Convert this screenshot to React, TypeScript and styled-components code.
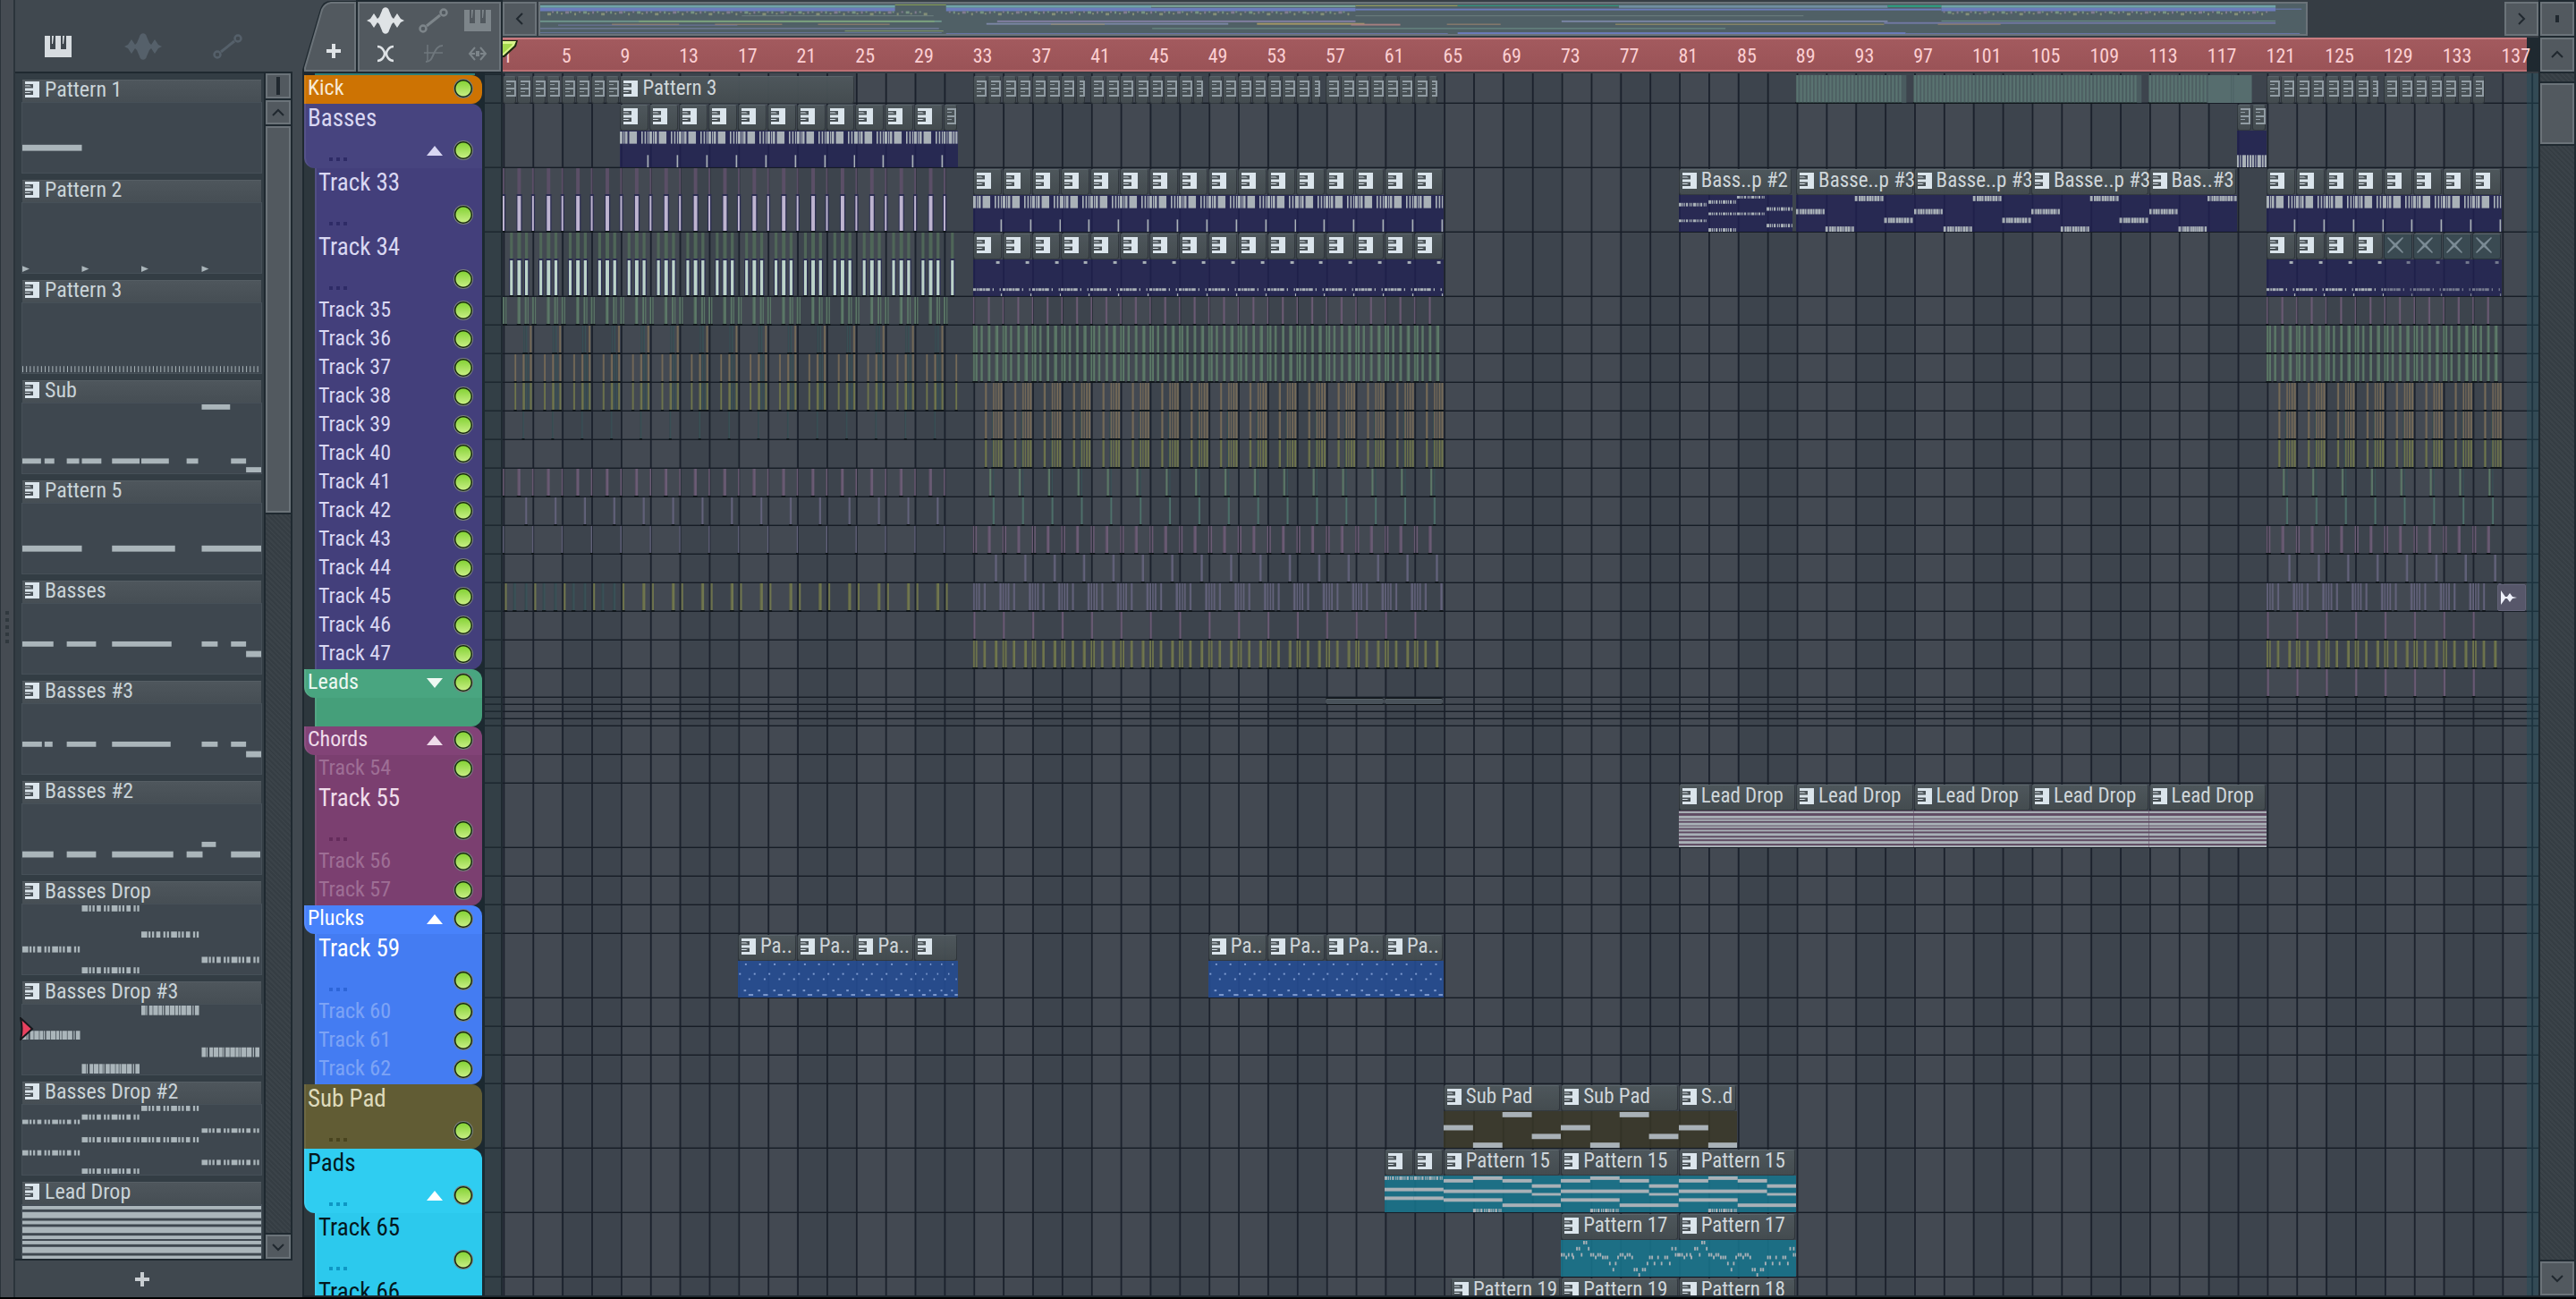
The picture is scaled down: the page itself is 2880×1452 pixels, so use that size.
import React from 'react';
import styled, { createGlobalStyle, css } from 'styled-components';

/* ---------- theme ---------- */

const GlobalStyle = createGlobalStyle`
  * { box-sizing: border-box; }
  body {
    margin: 0;
    background: #000;
    color: #c9d3d8;
    font-family: "Roboto Condensed", Roboto, "Liberation Sans", sans-serif;
    font-size: 24px;
    line-height: 24px;
    overflow: hidden;
  }
  button { font: inherit; color: inherit; border: 0; padding: 0; background: none; cursor: pointer; }
  svg { flex-shrink: 0; }
`;

const EDGE = '#1f2930';
const FACE = '#52595f';
const RIM = '#6b7379';
const PANEL = '#40484f';
const NOTE = '#a9b1b7';

const hatch = css`
  background: repeating-linear-gradient(45deg, #353d43 0 2px, #3b4349 2px 4px);
`;

/* Number of bars visible in the playlist. */
const SPAN = 138.5;
const pct = (bars: number) => `${(bars / SPAN) * 100}%`;

/* ---------- icons ---------- */

const PianoIcon = () => (
  <svg width="30" height="24" viewBox="0 0 30 24" aria-hidden="true">
    <path fill="currentColor" d="M0 0h6v15h6V0h6v15h6V0h6v24H0z" />
    <path fill="currentColor" d="M8 0h2l-1 9H8zM20 0h2l-1 9h-1z" />
  </svg>
);

const WaveIcon = () => (
  <svg width="42" height="30" viewBox="0 0 42 30" aria-hidden="true">
    <path
      fill="currentColor"
      d="M0 15l4-2 4-6 4 6 2-2 3-7c1-5 7-5 8 0l3 7 2 2 4-6 4 6 4 2-4 2-4 6-4-6-2 2-3 7c-1 5-7 5-8 0l-3-7-2-2-4 6-4-6z"
    />
  </svg>
);

const AutomationIcon = () => (
  <svg width="34" height="28" viewBox="0 0 34 28" fill="none" stroke="currentColor" aria-hidden="true">
    <circle cx="5" cy="23" r="3.500" strokeWidth="2.500" />
    <circle cx="28" cy="5" r="3.500" strokeWidth="2.500" />
    <path d="M9 20L24 8" strokeWidth="3" />
  </svg>
);

const CrossIcon = () => (
  <svg width="20" height="20" viewBox="0 0 20 20" fill="none" stroke="currentColor" aria-hidden="true">
    <path d="M1 2c5 0 8 5 8 8s-3 8-8 8M19 2c-5 0-8 5-8 8s3 8 8 8" strokeWidth="2.500" />
  </svg>
);

const CurveIcon = () => (
  <svg width="22" height="22" viewBox="0 0 22 22" fill="none" stroke="currentColor" aria-hidden="true">
    <path d="M4 1v18M0 10h21" strokeWidth="1.500" />
    <path d="M2 20c6 0 7-5 9-9s4-9 10-9" strokeWidth="2" />
  </svg>
);

const StretchIcon = () => (
  <svg width="22" height="16" viewBox="0 0 22 16" fill="none" stroke="currentColor" strokeWidth="2" aria-hidden="true">
    <path d="M8 1L2 8l6 7M14 1l6 7-6 7M3 8h5M14 8h5M10 5v6M12 5v6" />
  </svg>
);

const PlusIcon = () => (
  <svg width="16" height="16" viewBox="0 0 16 16" aria-hidden="true">
    <path fill="currentColor" d="M6 0h4v6h6v4h-6v6H6v-6H0V6h6z" />
  </svg>
);

const Chevron = ({ turn }: { turn: number }) => (
  <svg width="14" height="14" viewBox="0 0 14 14" fill="none" stroke="#20282f" strokeWidth="2" aria-hidden="true">
    <path d="M1 10l6-6 6 6" transform={`rotate(${turn} 7 7)`} />
  </svg>
);

/* Keys of a piano seen sideways: marks a pattern. */
const PatternIcon = () => (
  <svg width="16" height="18" viewBox="0 0 16 18" aria-hidden="true">
    <path fill="#dbe5ec" d="M0 0h16v18H0v-3h9v-4.500H0v-3h9V3H0z" />
    <path fill="#dbe5ec" d="M0 4.500h5l2 1H0zM0 12h7l-2 1H0z" />
  </svg>
);

/* The same keys on a clip too short to show them whole. */
const SmallPatternIcon = ({ w }: { w: number }) => (
  <svg width={w} height="18" viewBox={`0 0 ${w} 18`} opacity="0.65" aria-hidden="true">
    <path fill="#b9c6cf" d={`M0 0h${w}v18H0v-2h${w - 2}v-6H0v-2h${w - 2}V2H0z`} />
    <path fill="#b9c6cf" d="M0 4h5v1H0zM0 12h5v1H0z" />
  </svg>
);

const MuteIcon = () => (
  <svg width="18" height="18" viewBox="0 0 18 18" aria-hidden="true">
    <path fill="#7b8b95" d="M1 0l8 7 8-7 1 1-7 8 7 8-1 1-8-7-8 7-1-1 7-8-7-8z" />
  </svg>
);

/* ---------- note drawings ---------- */

type Kind = 'solid' | 'dense' | 'dash' | 'tri';
type Note = [x: number, y: number, w: number, h: number, kind?: Kind];

const DENSE = [
  [0, 0.07], [0.08, 0.02], [0.13, 0.06], [0.2, 0.08], [0.29, 0.06], [0.36, 0.02], [0.4, 0.07],
  [0.48, 0.08], [0.57, 0.05], [0.63, 0.03], [0.67, 0.08], [0.76, 0.08], [0.86, 0.02], [0.9, 0.07],
];
const DASH = [0, 0.25, 0.5, 0.75].flatMap((o, i) => [
  [o, i % 2 ? 0.07 : 0.1], [o + 0.12, 0.035], [o + 0.18, 0.035],
]);

const Notes = ({ notes, w, h, fill = NOTE }: { notes: Note[]; w: number; h: number; fill?: string }) => (
  <svg width="100%" height="100%" viewBox={`0 0 ${w} ${h}`} preserveAspectRatio="none" aria-hidden="true">
    {notes.flatMap(([x, y, nw, nh, kind = 'solid'], i) => {
      if (kind === 'tri') return [<path key={i} fill={fill} d={`M${x} ${y}l${nw} ${nh / 2}l${-nw} ${nh / 2}z`} />];
      const parts = kind === 'dense' ? DENSE : kind === 'dash' ? DASH : [[0, 1]];
      return parts.map(([o, f], k) => (
        <rect key={`${i}-${k}`} x={x + o * nw} y={y} width={f * nw} height={nh} fill={fill} />
      ));
    })}
  </svg>
);

const STRIPES: Note[] = [
  [0, 1, 269, 4], [0, 8, 269, 7], [0, 18, 269, 4], [0, 25, 269, 7],
  [0, 35, 269, 4], [0, 41, 269, 4], [0, 48, 269, 7], [0, 58, 269, 4], [0, 65, 269, 7], [0, 75, 269, 4],
];

const PATTERNS: { name: string; notes: Note[] }[] = [
  { name: 'Pattern 1', notes: [[0, 48, 67, 7]] },
  { name: 'Pattern 2', notes: [0, 67, 134, 202].map((x): Note => [x, 72, 8, 7, 'tri']) },
  { name: 'Pattern 3', notes: Array.from({ length: 64 }, (_, i): Note => [i * 4.2, 72, 1, 7]) },
  {
    name: 'Sub',
    notes: [
      [202, 1, 32, 6], [0, 63, 21, 6], [25, 63, 11, 6], [50, 63, 14, 6], [67, 63, 22, 6], [101, 63, 31, 6],
      [134, 63, 31, 6], [185, 63, 13, 6], [235, 63, 17, 6], [252, 73, 17, 6],
    ],
  },
  { name: 'Pattern 5', notes: [[0, 48, 67, 7], [101, 48, 71, 7], [202, 48, 67, 7]] },
  { name: 'Basses', notes: [[0, 43, 35, 6], [50, 43, 33, 6], [101, 43, 67, 6], [202, 43, 18, 6], [235, 43, 17, 6], [252, 54, 17, 7]] },
  {
    name: 'Basses #3',
    notes: [[0, 43, 22, 6], [25, 43, 9, 6], [50, 43, 33, 6], [101, 43, 66, 6], [202, 43, 18, 6], [235, 43, 17, 6], [252, 54, 17, 7]],
  },
  {
    name: 'Basses #2',
    notes: [[202, 43, 16, 6], [0, 54, 35, 7], [50, 54, 33, 7], [101, 54, 69, 7], [185, 54, 18, 7], [235, 54, 33, 7]],
  },
  {
    name: 'Basses Drop',
    notes: [
      [67, 1, 67, 7, 'dash'], [134, 31, 67, 7, 'dash'], [0, 48, 67, 7, 'dash'],
      [202, 60, 67, 7, 'dash'], [67, 72, 67, 7, 'dash'],
    ],
  },
  {
    name: 'Basses Drop #3',
    notes: [[134, 1, 67, 11, 'dense'], [0, 30, 67, 10, 'dense'], [202, 49, 67, 11, 'dense'], [67, 68, 67, 11, 'dense']],
  },
  {
    name: 'Basses Drop #2',
    notes: [
      [134, 1, 67, 6, 'dash'], [67, 11, 67, 6, 'dash'], [0, 17, 67, 5, 'dash'], [202, 27, 67, 5, 'dash'],
      [67, 37, 67, 6, 'dash'], [134, 37, 67, 6, 'dash'], [0, 52, 67, 6, 'dash'], [202, 63, 67, 6, 'dash'],
      [67, 73, 67, 6, 'dash'],
    ],
  },
  { name: 'Lead Drop', notes: STRIPES },
];

/* Clip previews use a 100 x 42 box. */
const BASS: Note[] = [
  [0, 1, 9, 14], [12, 1, 4, 14], [18, 1, 8, 14], [32, 1, 26, 14], [73, 1, 5, 14], [84, 1, 5, 14], [94, 1, 4, 14],
  [93, 28, 5, 14],
];
const BASS_LOW: Note[] = [[0, 28, 12, 14], [18, 28, 5, 14], [26, 28, 3, 14], [36, 28, 25, 14], [67, 28, 12, 14], [85, 28, 14, 14]];
const MELODY: Note[] = [
  [78, 2, 12, 3], [0, 33, 10, 3], [13, 33, 5, 3], [20, 33, 12, 3], [34, 33, 7, 3], [43, 33, 14, 3],
  [66, 33, 4, 3], [90, 33, 4, 3], [94, 39, 4, 3],
];
const DROP3: Note[] = [[0, 16, 25, 6, 'dense'], [25, 36, 25, 6, 'dense'], [50, 1, 25, 6, 'dense'], [75, 26, 25, 6, 'dense']];
const DROP3_SHORT: Note[] = [[0, 16, 33, 6, 'dense'], [33, 36, 33, 6, 'dense'], [66, 1, 34, 6, 'dense']];
const DROP2: Note[] = [
  [0, 9, 25, 4, 'dash'], [0, 28, 25, 3, 'dash'], [26, 6, 25, 4, 'dash'], [26, 20, 25, 3, 'dash'], [26, 38, 25, 4, 'dash'],
  [51, 1, 25, 3, 'dash'], [51, 20, 25, 3, 'dash'], [77, 14, 25, 4, 'dash'], [77, 33, 25, 4, 'dash'],
];
const SUBPAD: Note[] = [[0, 16, 25, 6], [25, 36, 25, 6], [50, 1, 25, 6], [75, 26, 25, 6]];
const SUBPAD_SHORT: Note[] = [[0, 16, 50, 6], [50, 36, 50, 6]];
const PAD_INTRO: Note[] = [[0, 1, 100, 4, 'dash'], [0, 14, 100, 4], [0, 24, 100, 4]];
const PAD: Note[] = [
  [0, 4, 25, 4], [25, 1, 25, 4], [50, 4, 25, 4], [75, 10, 25, 4], [0, 16, 75, 4], [75, 20, 25, 3],
  [0, 26, 50, 4], [50, 32, 50, 4], [25, 38, 25, 4, 'dash'],
];
const dot = ([x, y]: number[]): Note => [x, y, 1.4, 4];
const ARP: Note[] = [
  [0, 15], [2, 15], [4, 18], [6, 15], [9, 15], [10, 18], [13, 8], [15, 8], [17, 15], [19, 1], [21, 1], [23, 8],
  [25, 15], [27, 15], [29, 18], [31, 15], [33, 15], [35, 18], [37, 18], [39, 18], [41, 25], [44, 32], [46, 25], [48, 18],
  [50, 15], [52, 15], [54, 18], [56, 15], [58, 15], [60, 18], [62, 32], [64, 32], [66, 38], [69, 32], [71, 32], [73, 25],
  [75, 18], [77, 18], [79, 25], [82, 18], [85, 25], [88, 18], [90, 18], [92, 25], [94, 8], [97, 8], [97, 15], [99, 15],
].map(dot);
const PLUCK: Note[] = [
  [2, 14, 3, 2], [12, 3, 3, 2], [18, 20, 3, 2], [27, 14, 3, 2], [36, 3, 3, 2], [44, 20, 3, 2],
  [52, 14, 3, 2], [61, 3, 3, 2], [69, 20, 3, 2], [77, 14, 3, 2], [86, 3, 3, 2], [94, 20, 3, 2],
  [10, 33, 4, 2], [18, 38, 8, 2], [34, 33, 4, 2], [43, 38, 8, 2], [60, 33, 4, 2], [68, 38, 8, 2], [84, 33, 4, 2], [92, 38, 7, 2],
];
const LEAD: Note[] = [
  [0, 1, 100, 2], [0, 6, 100, 3], [0, 10, 100, 2], [0, 14, 100, 3], [0, 18, 100, 2],
  [0, 22, 100, 2], [0, 26, 100, 3], [0, 31, 100, 2], [0, 35, 100, 3], [0, 40, 100, 2],
];

/* ---------- playlist data ---------- */

interface ClipData {
  at: number;
  len: number;
  label?: string;
  tint?: string;
  notes?: Note[];
  look?: 'full' | 'mini' | 'mute' | 'audio';
}
type Hits = [number, number][];
interface Slices {
  color: string;
  from: number;
  to: number;
  hits: Hits;
  body?: string;
}
interface TrackData {
  name: string;
  tall?: boolean;
  faint?: boolean;
  clips?: ClipData[];
  slices?: Slices[];
}
interface GroupData {
  head: TrackData;
  color: string;
  low: string;
  text: string;
  dots: string;
  arrow?: 'up' | 'down';
  children?: TrackData[];
  collapsed?: number;
}

const NAVY = 'rgba(33, 33, 84, 0.76)';
const OLIVE = 'rgba(57, 55, 38, 0.82)';
const TEAL = 'rgba(24, 116, 140, 0.88)';
const BLUE = 'rgba(36, 76, 148, 0.88)';

const every = (from: number, to: number, step: number, make: (at: number) => ClipData) =>
  Array.from({ length: Math.ceil((to - from) / step) }, (_, i) => make(from + i * step));

const minis = (from: number, count: number, last = 0.9) =>
  every(from, from + count, 1, (at) => ({ at, len: at === from + count - 1 ? last : 0.98, look: 'mini' }));
const bass = (from: number, to: number) => every(from, to, 2, (at) => ({ at, len: 2, tint: NAVY, notes: BASS }));
const melody = (from: number, to: number, look: ClipData['look'] = 'full') =>
  every(from, to, 2, (at) => ({ at, len: 2, tint: NAVY, notes: MELODY, look }));

const C = {
  mauve: '#6b5c75', green: '#5d7969', tan: '#756b5a', olive: '#70764f', lilac: '#63637b', teal: '#3a5157', pine: '#4f716c',
};
const early = (color: string, hits: Hits, from = 1, to = 31.2): Slices => ({ color, hits, from, to });
const late = (color: string, hits: Hits): Slices[] => [
  { color, hits, from: 33, to: 65 },
  { color, hits, from: 121, to: 137 },
];
const GREEN_RUN: Hits = [[0, 0.12], [0.15, 0.15], [0.5, 0.16], [1, 0.18], [1.5, 0.22]];
const SWING: Hits = [[0.8, 0.14], [1.35, 0.1], [1.52, 0.08], [1.68, 0.12], [1.85, 0.14]];

const GROUPS: GroupData[] = [
  {
    color: '#cd7303', low: '#c76e00', text: '#f7ead8', dots: '#8a4c00',
    head: {
      name: 'Kick',
      clips: [
        ...minis(1, 8, 0.98), { at: 9, len: 16, label: 'Pattern 3' },
        ...minis(33, 8, 0.66), ...minis(41, 8, 0.72), ...minis(49, 8, 0.7), ...minis(57, 8, 0.68),
        ...minis(121, 8, 0.66), ...minis(129, 7),
      ],
      slices: [[89, 96], [97, 112], [113, 117]].map(([from, to]): Slices => ({
        color: '#5a726f', from, to,
        hits: [0, 0.25, 0.5, 0.75, 1, 1.25, 1.5, 1.75].map((o): [number, number] => [o, 0.15]),
      })),
    },
  },
  {
    color: '#47447f', low: '#433f7b', text: '#d9d7f2', dots: '#2e2b66', arrow: 'up',
    head: {
      name: 'Basses', tall: true,
      clips: [
        ...bass(9, 31),
        { at: 31, len: 0.95, tint: NAVY, notes: BASS_LOW.map(([x, , w]) => [x, 1, w, 14] as Note), look: 'mini' },
        { at: 119, len: 1, tint: NAVY, notes: BASS_LOW, look: 'mini' },
        { at: 120, len: 0.98, tint: NAVY, notes: BASS_LOW, look: 'mini' },
      ],
    },
    children: [
      {
        name: 'Track 33', tall: true,
        clips: [
          ...bass(33, 65),
          { at: 81, len: 7.75, label: 'Bass..p #2', tint: NAVY, notes: DROP2 },
          ...every(89, 113, 8, (at) => ({ at, len: 8, label: 'Basse..p #3', tint: NAVY, notes: DROP3 })),
          { at: 113, len: 6, label: 'Bas..#3', tint: NAVY, notes: DROP3_SHORT },
          ...bass(121, 137),
        ],
        slices: [{ color: '#5b4f67', body: '#beb4d0', from: 1, to: 31.2, hits: [[0, 0.12], [1, 0.24]] }],
      },
      {
        name: 'Track 34', tall: true,
        clips: [...melody(33, 65), ...melody(121, 129), ...melody(129, 137, 'mute')],
        slices: [{ color: '#4f6658', body: '#bcd3c9', from: 1, to: 31.6, hits: [[0.5, 0.19], [1, 0.24], [1.52, 0.2]] }],
      },
      { name: 'Track 35', slices: [early(C.green, [[0, 0.12], [0.18, 0.08], [1, 0.2], [1.5, 0.12], [1.68, 0.08]]), ...late(C.mauve, [[0, 0.1], [1, 0.14]])] },
      { name: 'Track 36', slices: [early(C.teal, [[1.4, 0.08], [1.55, 0.12]]), early(C.tan, [[1.84, 0.13]]), ...late(C.green, GREEN_RUN)] },
      {
        name: 'Track 37',
        slices: [
          early(C.tan, [[0.8, 0.12], [1.35, 0.14], [1.85, 0.13]]), early(C.teal, [[1.54, 0.1], [1.7, 0.08]]),
          early(C.tan, [[0.8, 0.12]], 31, 32), ...late(C.green, GREEN_RUN),
        ],
      },
      {
        name: 'Track 38',
        slices: [
          early(C.olive, [[0.8, 0.12], [1.35, 0.16], [1.85, 0.13]]), early(C.teal, [[1.54, 0.1], [1.7, 0.1]]),
          early(C.olive, [[0.8, 0.12]], 31, 32), ...late(C.tan, SWING),
        ],
      },
      { name: 'Track 39', slices: [early(C.teal, [[1.35, 0.1]]), ...late(C.teal, [[1.28, 0.1]]), ...late(C.tan, SWING)] },
      { name: 'Track 40', slices: [...late(C.teal, [[1.28, 0.1]]), ...late(C.olive, SWING)] },
      { name: 'Track 41', slices: [early(C.mauve, [[0, 0.1], [1, 0.2]]), ...late(C.green, [[1.1, 0.14]]), ...late(C.teal, [[1.33, 0.1]])] },
      { name: 'Track 42', slices: [early(C.lilac, [[1.52, 0.14]]), ...late(C.pine, [[1.33, 0.13]])] },
      { name: 'Track 43', slices: [early(C.lilac, [[0, 0.09]]), ...late(C.mauve, [[0, 0.09], [0.16, 0.1], [1, 0.2]])] },
      { name: 'Track 44', slices: late(C.lilac, [[1.47, 0.16]]) },
      {
        name: 'Track 45',
        clips: [{ at: 136.7, len: 1.95, look: 'audio' }],
        slices: [
          early(C.olive, [[0.15, 0.13]]), early(C.teal, [[0.72, 0.18], [1.5, 0.18]], 1, 9), early(C.olive, [[1.5, 0.2]], 9, 31),
          ...late(C.lilac, [[0, 0.12], [0.18, 0.1], [0.35, 0.12], [0.72, 0.14], [1.78, 0.16]]),
        ],
      },
      { name: 'Track 46', slices: late(C.mauve, [[0.02, 0.14]]) },
      { name: 'Track 47', slices: late(C.olive, [[0, 0.12], [0.17, 0.12], [0.7, 0.17], [1.47, 0.19]]) },
    ],
  },
  {
    color: '#49a580', low: '#459f7a', text: '#eef8f2', dots: '#2d7757', arrow: 'down', collapsed: 4,
    head: { name: 'Leads', slices: [{ color: C.mauve, from: 121, to: 136, hits: [[0.02, 0.15]] }] },
  },
  {
    color: '#824377', low: '#7b3f70', text: '#efdcea', dots: '#652c5c', arrow: 'up',
    head: { name: 'Chords' },
    children: [
      { name: 'Track 54', faint: true },
      {
        name: 'Track 55', tall: true,
        clips: every(81, 121, 8, (at) => ({ at, len: 8, label: 'Lead Drop', tint: '#5f4a62', notes: LEAD })),
      },
      { name: 'Track 56', faint: true },
      { name: 'Track 57', faint: true },
    ],
  },
  {
    color: '#4882fb', low: '#447cf2', text: '#ffffff', dots: '#2d65d8', arrow: 'up',
    head: { name: 'Plucks' },
    children: [
      {
        name: 'Track 59', tall: true,
        clips: [
          ...every(17, 29, 4, (at) => ({ at, len: 4, label: 'Pa..', tint: BLUE, notes: PLUCK })),
          { at: 29, len: 3, tint: BLUE, notes: PLUCK },
          ...every(49, 65, 4, (at) => ({ at, len: 4, label: 'Pa..', tint: BLUE, notes: PLUCK })),
        ],
      },
      { name: 'Track 60', faint: true },
      { name: 'Track 61', faint: true },
      { name: 'Track 62', faint: true },
    ],
  },
  {
    color: '#615c34', low: '#5b562f', text: '#dedabb', dots: '#49441f',
    head: {
      name: 'Sub Pad', tall: true,
      clips: [
        { at: 65, len: 8, label: 'Sub Pad', tint: OLIVE, notes: SUBPAD },
        { at: 73, len: 8, label: 'Sub Pad', tint: OLIVE, notes: SUBPAD },
        { at: 81, len: 4, label: 'S..d', tint: OLIVE, notes: SUBPAD_SHORT },
      ],
    },
  },
  {
    color: '#2fcdf1', low: '#2cc9ed', text: '#04181e', dots: '#0e97c4', arrow: 'up',
    head: {
      name: 'Pads', tall: true,
      clips: [
        ...every(61, 65, 2, (at) => ({ at, len: 2, tint: TEAL, notes: PAD_INTRO })),
        ...every(65, 89, 8, (at) => ({ at, len: 8, label: 'Pattern 15', tint: TEAL, notes: PAD })),
      ],
    },
    children: [
      { name: 'Track 65', tall: true, clips: every(73, 89, 8, (at) => ({ at, len: 8, label: 'Pattern 17', tint: TEAL, notes: ARP })) },
      {
        name: 'Track 66', tall: true,
        clips: [
          { at: 65.5, len: 7.5, label: 'Pattern 19', tint: TEAL },
          { at: 73, len: 8, label: 'Pattern 19', tint: TEAL },
          { at: 81, len: 8, label: 'Pattern 18', tint: TEAL },
        ],
      },
    ],
  },
];

/* ---------- shell ---------- */

const Shell = styled.main`
  display: flex;
  height: 100vh;
  border-bottom: 2px solid #000;
  background: ${PANEL};
`;

const Splitter = styled.div`
  flex: 0 0 17px;
  display: flex;
  flex-direction: column;
  align-items: center;
  justify-content: center;
  gap: 4px;
  padding-bottom: 48px;
  border-left: 1px solid #2b333a;
  border-right: 2px solid #2b343b;
  background: #454b52;
`;

const Grip = styled.i<{ $color: string; $size: number }>`
  display: block;
  width: ${(p) => p.$size}px;
  height: ${(p) => p.$size}px;
  background: ${(p) => p.$color};
`;

/* ---------- browser ---------- */

const Browser = styled.aside`
  flex: 0 0 321px;
  display: flex;
  flex-direction: column;
  min-height: 0;
`;

const BrowserTabs = styled.nav`
  flex: 0 0 80px;
  display: flex;
  padding: 24px 36px 0 0;
`;

const BrowserTab = styled.button<{ $active?: boolean }>`
  flex: 1;
  display: grid;
  place-items: center;
  height: 56px;
  color: ${(p) => (p.$active ? '#d7dce0' : '#55606a')};
`;

const BrowserBody = styled.div`
  flex: 1;
  display: flex;
  min-height: 0;
  margin-right: 11px;
  border: solid ${EDGE};
  border-width: 2px 2px 2px 0;
`;

const PatternList = styled.ul`
  flex: 1;
  margin: 0;
  padding: 7px 2px 0 7px;
  overflow: hidden;
  list-style: none;
  background: #333d44;
  border-right: 2px solid ${EDGE};
`;

const PatternItem = styled.li`
  position: relative;
  height: 105px;
  margin-bottom: 7px;
`;

const PatternTitle = styled.button`
  display: flex;
  align-items: center;
  gap: 6px;
  width: calc(100% - 2px);
  height: 25px;
  margin-left: 1px;
  padding: 0 0 4px 3px;
  border-top: 1px solid #565f65;
  background: linear-gradient(#4e565c, #464e54);
`;

const Preview = styled.div`
  height: 80px;
  border: 1px solid #465058;
  background: #3e474f;
  & svg { display: block; }
`;

const Playing = styled.svg`
  position: absolute;
  left: -2px;
  top: 40px;
`;

const BrowserFoot = styled.div`
  flex: 0 0 41px;
  display: grid;
  place-items: center;
  padding-right: 38px;
`;

const PlainButton = styled.button`
  display: grid;
  place-items: center;
  padding: 8px;
  color: #c9ced2;
`;

const ScrollColumn = styled.div<{ $size: number }>`
  flex: 0 0 ${(p) => p.$size}px;
  display: flex;
  flex-direction: column;
  gap: 2px;
  background: ${EDGE};
`;

const SideScroll = styled(ScrollColumn)`
  padding: 0 2px;
`;

const ScrollButton = styled.button<{ $h: number }>`
  flex: 0 0 ${(p) => p.$h}px;
  display: grid;
  place-items: center;
  border: 2px solid ${RIM};
  background: ${FACE};
`;

const Thumb = styled.div<{ $share: number }>`
  flex: 0 0 ${(p) => p.$share}%;
  border: 2px solid ${RIM};
  background: ${FACE};
`;

const Trough = styled.div<{ $h?: number }>`
  flex: ${(p) => (p.$h ? `0 0 ${p.$h}px` : '1')};
  ${hatch}
`;

const Bar = styled.i<{ $h: number }>`
  width: 4px;
  height: ${(p) => p.$h}px;
  background: #20282f;
`;

/* ---------- playlist ---------- */

const Playlist = styled.section`
  flex: 1;
  display: flex;
  flex-direction: column;
  min-width: 0;
  border-left: 2px solid ${EDGE};
`;

const TopBar = styled.header`
  flex: 0 0 82px;
  display: flex;
  background: #363d44;
`;

const Tools = styled.div`
  flex: 0 0 222px;
  display: flex;
  gap: 2px;
  padding: 2px 2px 2px 0;
  background: ${EDGE};
`;

const TabButton = styled.button`
  position: relative;
  flex: 0 0 58px;
  display: grid;
  place-items: end start;
  padding: 0 0 15px 25px;
  color: #dfe3e6;
`;

const TabShape = styled.svg`
  position: absolute;
  inset: -2px 0 0 -2px;
`;

const PlusMark = styled.span`
  position: relative;
  display: grid;
`;

const ToolGrid = styled.div`
  flex: 1;
  display: grid;
  grid-template: 38px 36px / 58px 50px 1fr;
  border: 2px solid ${RIM};
  background: ${FACE};
`;

const Tool = styled.button<{ $tone: string }>`
  display: grid;
  place-items: center;
  color: ${(p) => p.$tone};
`;

const Timeline = styled.div`
  flex: 1;
  display: flex;
  flex-direction: column;
  gap: 2px;
  padding-top: 2px;
  min-width: 0;
`;

const MapRow = styled.div`
  display: flex;
  height: 38px;
`;

const ArrowButton = styled.button`
  flex: 0 0 38px;
  display: grid;
  place-items: center;
  border: 2px solid ${RIM};
  background: ${FACE};
`;

const MapTrack = styled.div`
  flex: 1;
  padding-left: 2px;
`;

const MapThumb = styled.div`
  width: 90%;
  height: 38px;
  border: 2px solid ${RIM};
  background: #506066;
  & svg { display: block; }
`;

const Ruler = styled.div`
  position: relative;
  display: flex;
  height: 38px;
  color: #fccfd2;
  font-size: 22px;
  line-height: 41px;
  background:
    linear-gradient(#c97c80 0 2px, #a35a5e 2px, #9a5357 36px, #bd7074 36px) 0 0 / calc(100% - 13px) 100% no-repeat,
    ${EDGE};
`;

const RulerMark = styled.span`
  flex: 0 0 ${pct(4)};
  min-width: 0;
  white-space: nowrap;
`;

const Playhead = styled.svg`
  position: absolute;
  left: 0;
  top: 3px;
`;

const CornerColumn = styled.div`
  flex: 0 0 42px;
  display: flex;
  flex-direction: column;
  gap: 2px;
  padding: 2px;
  background: ${EDGE};
`;

const Body = styled.div`
  flex: 1;
  display: flex;
  min-height: 0;
  border-bottom: 2px solid ${EDGE};
`;

const Heads = styled.div`
  flex: 0 0 202px;
  padding: 0 3px 0 0;
  overflow: hidden;
  background: #1c2930;
`;

const Sliver = styled.div`
  height: 2px;
  margin: 0 8px 0 12px;
  background: #2f7f78;
`;

const Group = styled.div`
  overflow: hidden;
  border-radius: 0 12px 12px 0;
  background: #2d373d;
`;

const Head = styled.div<{ $tall?: boolean; $child?: boolean; $parent?: boolean; $bg: string; $fg: string }>`
  display: flex;
  justify-content: space-between;
  height: ${(p) => (p.$tall ? 72 : 32)}px;
  margin-left: ${(p) => (p.$child ? 12 : 0)}px;
  padding: 2px 10px 0 2px;
  border-left: 2px solid rgba(255, 255, 255, 0.08);
  border-bottom-left-radius: ${(p) => (p.$parent ? 12 : 0)}px;
  background: ${(p) => p.$bg};
  color: ${(p) => p.$fg};
  font-size: ${(p) => (p.$tall ? 27 : 24)}px;
  line-height: ${(p) => (p.$tall ? 28 : 24)}px;
`;

const NameStack = styled.div`
  display: flex;
  flex-direction: column;
  justify-content: space-between;
`;

const NameLabel = styled.label<{ $faint?: boolean }>`
  opacity: ${(p) => (p.$faint ? 0.3 : 1)};
  white-space: nowrap;
`;

const DotMenu = styled.button<{ $child?: boolean }>`
  display: flex;
  gap: 4px;
  padding: 0 0 8px ${(p) => (p.$child ? 12 : 24)}px;
`;

const Controls = styled.div<{ $tall?: boolean }>`
  display: flex;
  align-items: center;
  gap: 12px;
  height: 26px;
  margin-top: ${(p) => (p.$tall ? 37 : 0)}px;
`;

const Led = styled.input`
  appearance: none;
  width: 22px;
  height: 22px;
  margin: 0;
  border: 1px solid rgba(190, 190, 200, 0.6);
  border-radius: 50%;
  background: radial-gradient(circle, transparent 0 8px, #12240c 9px), linear-gradient(#7fd02f, #cdf08a);
`;

const FoldButton = styled.button`
  display: grid;
`;

const CollapsedStub = styled.div<{ $bg: string }>`
  height: 32px;
  margin-left: 12px;
  border-left: 2px solid rgba(255, 255, 255, 0.08);
  background: ${(p) => p.$bg};
`;

const Strip = styled.div`
  flex: 0 0 20px;
  overflow: hidden;
  border-right: 2px solid ${EDGE};
  background: #333f46;
`;

const StripCell = styled.div<{ $h: number }>`
  height: ${(p) => p.$h}px;
  box-shadow: inset 0 -1px #1d2830, inset 0 -2px #263138;
`;

const Lanes = styled.div`
  position: relative;
  flex: 1;
  min-width: 0;
  padding-top: 2px;
  overflow: hidden;
`;

const Grid = styled.svg`
  position: absolute;
  inset: 0;
  width: 100%;
  height: 100%;
`;

const PastEnd = styled.div`
  position: absolute;
  inset: 0 0 0 auto;
  width: 13px;
  background: rgba(34, 75, 88, 0.45);
`;

const Lane = styled.div<{ $h: number }>`
  position: relative;
  height: ${(p) => p.$h}px;
  box-shadow: inset 0 -1px #171d26, inset 0 -2px rgba(27, 34, 43, 0.45);
`;

const SliceLayer = styled.svg`
  position: absolute;
  inset: 0;
  width: 100%;
  height: 100%;
`;

const ClipBox = styled.article<{ $h: number }>`
  position: absolute;
  top: 1px;
  display: flex;
  flex-direction: column;
  height: ${(p) => p.$h}px;
`;

const ClipHead = styled.header<{ $look: string; $fill?: boolean }>`
  flex: ${(p) => (p.$fill ? '1' : '0 0 29px')};
  display: flex;
  align-items: center;
  gap: 5px;
  margin-right: 1px;
  padding: 0 0 3px 3px;
  border: 1px solid rgba(20, 26, 32, 0.45);
  border-top-color: #5a646a;
  border-radius: 3px;
  background: ${(p) =>
    p.$look === 'mute' ? '#3a4a52' : 'linear-gradient(rgba(78, 87, 92, 0.97), rgba(68, 76, 80, 0.97))'};
  color: #cfd6da;
  font-size: 23px;
  white-space: pre;
`;

const ClipBody = styled.div<{ $tint: string; $mute?: boolean }>`
  flex: 1;
  min-height: 0;
  background: ${(p) => p.$tint};
  & svg { display: block; opacity: ${(p) => (p.$mute ? 0.6 : 1)}; }
`;

const AudioClip = styled.div`
  position: absolute;
  top: 1px;
  display: grid;
  align-items: center;
  height: 30px;
  padding-left: 3px;
  border: 1px solid #626277;
  border-radius: 2px;
  background: #57576a;
`;

const StubClip = styled.div`
  position: absolute;
  top: 1px;
  height: 6px;
  border-top: 1px solid #5a646a;
  border-radius: 2px;
  background: #49525a;
  box-shadow: 0 1px #0e1317, 0 -1px #0e1317;
`;

/* ---------- pieces ---------- */

const Clip = ({ clip, tall }: { clip: ClipData; tall?: boolean }) => {
  const place = { left: pct(clip.at - 1), width: pct(clip.len) };
  const look = clip.look ?? 'full';
  if (look === 'audio') {
    return (
      <AudioClip style={place}>
        <svg width="18" height="16" viewBox="0 0 18 16" aria-hidden="true">
          <path fill="#eef0fa" d="M0 0l5 7h2l3-4 3 4 5 1-5 1-3 4-3-4H5l-5 7z" />
        </svg>
      </AudioClip>
    );
  }
  return (
    <ClipBox $h={tall ? 70 : 31} style={place}>
      <ClipHead $look={look} $fill={!clip.tint && !tall}>
        {look === 'mute' && <MuteIcon />}
        {look === 'mini' && <SmallPatternIcon w={Math.round(clip.len * 16) - 5} />}
        {look === 'full' && <PatternIcon />}
        {clip.label && <span>{clip.label}</span>}
      </ClipHead>
      {clip.tint && (
        <ClipBody $tint={clip.tint} $mute={look === 'mute'}>
          {clip.notes && <Notes notes={clip.notes} w={100} h={42} fill={clip.notes === PLUCK ? '#7f9bd0' : NOTE} />}
        </ClipBody>
      )}
    </ClipBox>
  );
};

const SliceRects = ({ list, h }: { list: Slices[]; h: number }) => (
  <SliceLayer viewBox={`0 0 ${SPAN} ${h}`} preserveAspectRatio="none" aria-hidden="true">
    {list.flatMap((s, n) => {
      const bars = Array.from({ length: Math.ceil((s.to - s.from) / 2) }, (_, i) => s.from + i * 2);
      return bars.flatMap((bar) =>
        s.hits
          .filter(([o]) => bar + o < s.to + 0.05)
          .map(([o, w]) => {
            const x = bar - 1 + o;
            return (
              <g key={`${n}-${bar}-${o}`}>
                <rect x={x} y="0" width={w} height={s.body ? 29 : h - 1} fill={s.color} />
                {!s.body && <rect x={x} y="0" width={w / 3} height={h - 1} fill="#000" opacity="0.12" />}
                <rect x={x - 0.04} y={h - 2} width={w + 0.08} height="2" fill="#10161a" />
                {s.body && <rect x={x - 0.06} y="29" width={w + 0.14} height={h - 31} fill="#2b2d50" />}
                {s.body && <rect x={x} y="31" width={w} height={h - 33} fill={s.body} />}
              </g>
            );
          }),
      );
    })}
  </SliceLayer>
);

const TrackLane = ({ track }: { track: TrackData }) => {
  const h = track.tall ? 72 : 32;
  return (
    <Lane $h={h}>
      {track.slices && <SliceRects list={track.slices} h={h} />}
      {track.name === 'Kick' && (
        <SliceLayer viewBox={`0 0 ${SPAN} 32`} preserveAspectRatio="none" aria-hidden="true">
          {[[88, 7.5], [96, 15.5], [112, 4]].map(([x, w]) => (
            <rect key={x} x={x} y="0" width={w} height="31" fill="#5a7875" opacity="0.45" />
          ))}
          <rect x="116" y="0" width="3" height="31" fill="#566d6e" />
          <path d="M117.600 0v31M117.750 0v31" stroke="#455b5c" strokeWidth="0.06" />
        </SliceLayer>
      )}
      {track.clips?.map((c) => <Clip key={c.at} clip={c} tall={track.tall} />)}
    </Lane>
  );
};

const TrackHead = ({ track, group, child }: { track: TrackData; group: GroupData; child?: boolean }) => {
  const id = `mute-${track.name.replace(/\s/g, '-')}`;
  const arrow = !child && group.arrow;
  return (
    <Head
      $tall={track.tall}
      $child={child}
      $parent={!!arrow}
      $bg={child ? group.low : group.color}
      $fg={group.text}
    >
      <NameStack>
        <NameLabel htmlFor={id} $faint={track.faint}>{track.name}</NameLabel>
        {track.tall && (
          <DotMenu $child={child} aria-label={`${track.name} options`}>
            {[0, 1, 2].map((n) => <Grip key={n} $size={4} $color={group.dots} />)}
          </DotMenu>
        )}
      </NameStack>
      <Controls $tall={track.tall}>
        {arrow && (
          <FoldButton aria-label={`Fold ${track.name}`}>
            <svg width="18" height="11" viewBox="0 0 18 11" aria-hidden="true">
              <path fill={group.text === '#04181e' ? '#fff' : group.text} d={arrow === 'up' ? 'M9 0l9 11H0z' : 'M0 0h18L9 11z'} />
            </svg>
          </FoldButton>
        )}
        <Led type="checkbox" id={id} defaultChecked />
      </Controls>
    </Head>
  );
};

const laneHeights = GROUPS.flatMap((g) => [
  g.head.tall ? 72 : 32,
  ...Array.from({ length: g.collapsed ?? 0 }, () => 8),
  ...(g.children ?? []).map((t) => (t.tall ? 72 : 32)),
]);

const MiniMap = () => {
  const speck = (from: number, to: number) =>
    Array.from({ length: Math.floor((to - from) / 5) }, (_, i) => from + i * 5);
  const lines: [number, number, number, number, string][] = [
    [0, 2, 396, 3, '#6fa3a8'], [396, 1, 57, 1, '#90a552'], [453, 2, 229, 3, '#6fa3a8'], [682, 2, 228, 2, '#7fa99a'],
    [910, 2, 114, 1, '#a5a95c'], [1024, 2, 180, 1, '#2aa383'], [1204, 2, 300, 3, '#6f8ea0'], [1504, 2, 60, 2, '#2aa383'],
    [1564, 2, 373, 3, '#6fa3a8'], [0, 5, 396, 4, '#6c7cbb'], [453, 5, 457, 4, '#6c7cbb'], [910, 6, 654, 2, '#6c7cbb'],
    [1564, 5, 373, 4, '#6c7cbb'], [1937, 6, 29, 1, '#6c7cbb'],
    [225, 14, 214, 1, '#6f8080'], [910, 14, 500, 1, '#6f8080'],
    [0, 20, 448, 2, '#6f958c'], [110, 20, 330, 2, '#7ba07c'], [510, 20, 400, 2, '#837fa3'],
    [20, 25, 200, 1, '#7279a4'], [80, 24, 75, 1, '#a38670'], [195, 24, 75, 1, '#a38670'], [310, 24, 80, 1, '#a38670'],
    [498, 23, 270, 2, '#7b86a6'], [570, 24, 60, 1, '#9b8f70'], [800, 23, 120, 2, '#a59868'], [905, 24, 55, 2, '#a57f80'],
    [1012, 24, 60, 1, '#a38670'], [1140, 20, 364, 2, '#7b86a6'], [1200, 24, 300, 1, '#a59868'],
    [1564, 20, 373, 1, '#6f958c'], [1500, 22, 437, 2, '#7279a4'], [1560, 24, 70, 1, '#a38670'],
    [0, 29, 445, 1, '#7f88b0'], [340, 32, 110, 1, '#8aa06d'], [683, 29, 640, 1, '#6f958c'],
    [453, 35, 560, 1, '#6a76a8'], [1024, 34, 500, 2, '#6c7cbb'], [1524, 35, 440, 1, '#6a76a8'], [0, 34, 448, 1, '#67769a'],
  ];
  return (
    <svg width="100%" height="34" viewBox="0 0 1971 36" preserveAspectRatio="none" aria-hidden="true">
      {lines.map(([x, y, w, h, c], i) => <rect key={i} x={x} y={y} width={w} height={h} fill={c} />)}
      {[...speck(8, 436), ...speck(456, 908), ...speck(1566, 1932)].map((x, i) => (
        <rect key={x} x={x} y={i % 3 ? 9 : 11} width={i % 4 ? 2 : 4} height={i % 2 ? 2 : 3} fill={['#838e78', '#817c90', '#779383'][i % 3]} />
      ))}
    </svg>
  );
};

/* ---------- app ---------- */

export default function App() {
  return (
    <>
      <GlobalStyle />
      <Shell>
        <Splitter>
          {[0, 1, 2, 3, 4].map((n) => <Grip key={n} $size={4} $color="#30383e" />)}
        </Splitter>

        <Browser>
          <BrowserTabs>
            <BrowserTab $active aria-label="Patterns"><PianoIcon /></BrowserTab>
            <BrowserTab aria-label="Audio clips"><WaveIcon /></BrowserTab>
            <BrowserTab aria-label="Automation clips"><AutomationIcon /></BrowserTab>
          </BrowserTabs>
          <BrowserBody>
            <PatternList>
              {PATTERNS.map((p) => (
                <PatternItem key={p.name}>
                  <PatternTitle><PatternIcon />{p.name}</PatternTitle>
                  <Preview><Notes notes={p.notes} w={269} h={80} fill="#aab5ba" /></Preview>
                  {p.name === 'Basses Drop #3' && (
                    <Playing width="16" height="26" viewBox="0 0 16 26" aria-hidden="true">
                      <path d="M1 1l13 12L1 25c2-8 2-16 0-24z" fill="#e8415f" stroke="#17181d" strokeWidth="2" />
                    </Playing>
                  )}
                </PatternItem>
              ))}
            </PatternList>
            <ScrollColumn $size={28}>
              <ScrollButton $h={28} aria-label="Resize list"><Bar $h={20} /></ScrollButton>
              <ScrollButton $h={27} aria-label="Scroll up"><Chevron turn={0} /></ScrollButton>
              <Thumb $share={32.6} />
              <Trough />
              <ScrollButton $h={27} aria-label="Scroll down"><Chevron turn={180} /></ScrollButton>
            </ScrollColumn>
          </BrowserBody>
          <BrowserFoot>
            <PlainButton aria-label="Add pattern"><PlusIcon /></PlainButton>
          </BrowserFoot>
        </Browser>

        <Playlist>
          <TopBar>
            <Tools>
              <TabButton aria-label="Add track">
                <TabShape width="60" height="80" viewBox="0 0 60 80" aria-hidden="true">
                  <path d="M0 0h60v80H0z" fill={PANEL} />
                  <path d="M0 80V78L20 10Q23 1 32 1H60V80z" fill={EDGE} />
                  <path d="M3 79V76L22 11Q25 4 32 3H59V79z" fill={FACE} stroke={RIM} strokeWidth="2" />
                </TabShape>
                <PlusMark><PlusIcon /></PlusMark>
              </TabButton>
              <ToolGrid>
                <Tool $tone="#dfe3e6" aria-label="Audio"><WaveIcon /></Tool>
                <Tool $tone="#7d858a" aria-label="Automation"><AutomationIcon /></Tool>
                <Tool $tone="#7d858a" aria-label="Patterns"><PianoIcon /></Tool>
                <Tool $tone="#dfe3e6" aria-label="Crossfade"><CrossIcon /></Tool>
                <Tool $tone="#6f777d" aria-label="Curve"><CurveIcon /></Tool>
                <Tool $tone="#7d858a" aria-label="Stretch"><StretchIcon /></Tool>
              </ToolGrid>
            </Tools>
            <Timeline>
              <MapRow>
                <ArrowButton aria-label="Scroll left"><Chevron turn={-90} /></ArrowButton>
                <MapTrack><MapThumb><MiniMap /></MapThumb></MapTrack>
                <ArrowButton aria-label="Scroll right"><Chevron turn={90} /></ArrowButton>
              </MapRow>
              <Ruler>
                {Array.from({ length: 35 }, (_, i) => <RulerMark key={i}>{i * 4 + 1}</RulerMark>)}
                <Playhead width="18" height="20" viewBox="0 0 18 20" aria-hidden="true">
                  <path d="M-1 0H17L15 7L2 19H-1z" fill="#1c2b10" />
                  <path d="M-1 1H15L13 6L1 17H-1z" fill="#d9f58b" />
                  <path d="M0 4H11L10 6L0 15z" fill="#a4d84e" />
                </Playhead>
              </Ruler>
            </Timeline>
            <CornerColumn>
              <ScrollButton $h={38} aria-label="Zoom"><Bar $h={8} /></ScrollButton>
              <ScrollButton $h={38} aria-label="Scroll up"><Chevron turn={0} /></ScrollButton>
            </CornerColumn>
          </TopBar>

          <Body>
            <Heads>
              <Sliver />
              {GROUPS.map((g) => (
                <Group key={g.head.name}>
                  <TrackHead track={g.head} group={g} />
                  {g.children?.map((t) => <TrackHead key={t.name} track={t} group={g} child />)}
                  {g.collapsed && <CollapsedStub $bg={g.low} />}
                </Group>
              ))}
            </Heads>
            <Strip>
              <StripCell $h={2} />
              {laneHeights.map((h, i) => <StripCell key={i} $h={h} />)}
            </Strip>
            <Lanes>
              <Grid viewBox={`0 0 ${SPAN} 100`} preserveAspectRatio="none" aria-hidden="true">
                {Array.from({ length: 35 }, (_, i) => (
                  <rect key={i} x={i * 4} y="0" width="4" height="100" fill={i % 2 ? '#3d444d' : '#434952'} />
                ))}
                {Array.from({ length: 70 }, (_, i) => (
                  <rect key={i} x={i * 2 + 0.03} y="0" width="0.11" height="100" fill="#1b212c" />
                ))}
              </Grid>
              {GROUPS.map((g) => (
                <React.Fragment key={g.head.name}>
                  <TrackLane track={g.head} />
                  {Array.from({ length: g.collapsed ?? 0 }, (_, i) => (
                    <Lane key={i} $h={8}>
                      {i === 0 && [57, 61].map((at) => <StubClip key={at} style={{ left: pct(at - 1), width: pct(3.95) }} />)}
                    </Lane>
                  ))}
                  {g.children?.map((t) => <TrackLane key={t.name} track={t} />)}
                </React.Fragment>
              ))}
              <PastEnd />
            </Lanes>
            <SideScroll $size={42}>
              <Trough $h={9} />
              <Thumb $share={5} />
              <Trough />
              <ScrollButton $h={38} aria-label="Scroll down"><Chevron turn={180} /></ScrollButton>
            </SideScroll>
          </Body>
        </Playlist>
      </Shell>
    </>
  );
}
